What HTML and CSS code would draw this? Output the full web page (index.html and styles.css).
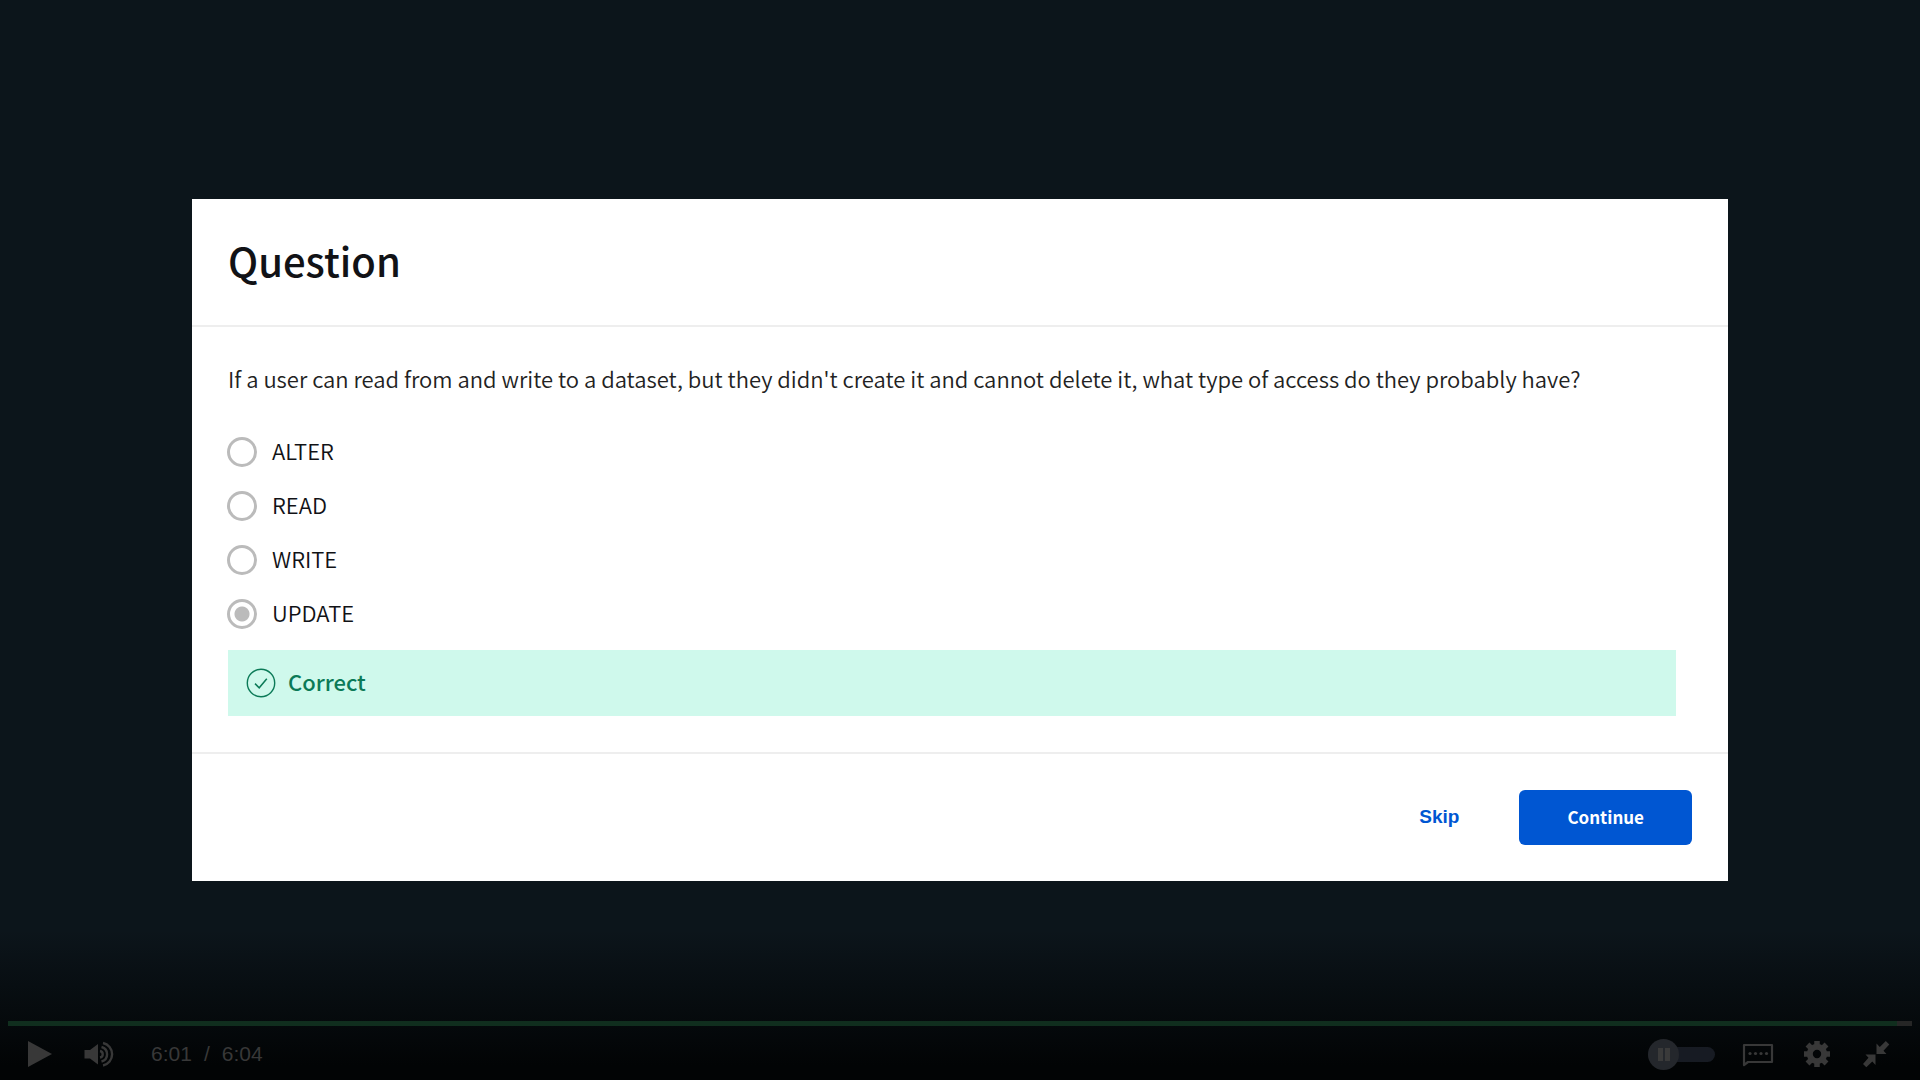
FILE: index.html
```html
<!DOCTYPE html>
<html lang="en">
<head>
<meta charset="utf-8">
<meta name="viewport" content="width=device-width, initial-scale=1">
<title>Question</title>
<link rel="stylesheet" href="styles.css">
</head>
<body>
<main class="player">
  <form class="dialog">
    <header class="dialog-header">
      <h1 class="dialog-title">Question</h1>
    </header>
    <fieldset class="dialog-body">
      <legend class="prompt">If a user can read from and write to a dataset, but they didn't create it and cannot delete it, what type of access do they probably have?</legend>
      <label class="option"><input class="radio" type="radio" name="access" value="alter"><span class="option-text">ALTER</span></label>
      <label class="option"><input class="radio" type="radio" name="access" value="read"><span class="option-text">READ</span></label>
      <label class="option"><input class="radio" type="radio" name="access" value="write"><span class="option-text">WRITE</span></label>
      <label class="option"><input class="radio" type="radio" name="access" value="update" checked><span class="option-text">UPDATE</span></label>
      <p class="feedback">
        <svg class="feedback-icon" viewBox="0 0 30 30" fill="none" stroke="currentColor" aria-hidden="true">
          <circle cx="15" cy="15" r="13.7" stroke-width="1.4"/>
          <path d="M9 15.6l4.2 4.2 7.6-9" stroke-width="1.5"/>
        </svg>
        <span class="option-text">Correct</span>
      </p>
    </fieldset>
    <footer class="dialog-footer">
      <button class="skip" type="button">Skip</button>
      <button class="continue" type="button">Continue</button>
    </footer>
  </form>

  <section class="controls" aria-label="Video controls">
    <div class="progress"><div class="progress-played" style="width: 99.2%"></div></div>
    <div class="control-row">
      <button class="control" type="button" aria-label="Play">
        <svg class="icon" viewBox="0 0 32 32" fill="currentColor"><path d="M4 3l24 13-24 13z"/></svg>
      </button>
      <button class="control volume" type="button" aria-label="Mute">
        <svg class="icon" viewBox="0 0 32 32">
          <path fill="currentColor" d="M1.500 12h5.500L15 6v20.500L7 20.500H1.500z"/>
          <g fill="none" stroke="currentColor" stroke-width="2.400">
            <path d="M17 13a3.300 3.300 0 0 1 0 6.500"/>
            <path d="M18.500 9a7.500 7.500 0 0 1 0 14.500"/>
            <path d="M20 5a11.500 11.500 0 0 1 0 22.500"/>
          </g>
        </svg>
      </button>
      <div class="time"><span>6:01</span><span>/</span><span>6:04</span></div>
      <div class="control-end">
        <button class="autoplay" type="button" aria-label="Autoplay">
          <span class="autoplay-knob"></span>
        </button>
        <button class="control" type="button" aria-label="Captions">
          <svg class="icon" viewBox="0 0 32 32">
            <path fill="none" stroke="currentColor" stroke-width="2.200" stroke-linejoin="round" d="M2 7h28v17H6l-4 3z"/>
            <g fill="currentColor"><circle cx="8" cy="15.500" r="1.600"/><circle cx="13.500" cy="15.500" r="1.600"/><circle cx="19" cy="15.500" r="1.600"/><circle cx="24.500" cy="15.500" r="1.600"/></g>
          </svg>
        </button>
        <button class="control" type="button" aria-label="Settings">
          <svg class="icon" viewBox="0 0 32 32">
            <circle cx="16" cy="16" r="7.200" fill="none" stroke="currentColor" stroke-width="6"/>
            <g stroke="currentColor" stroke-width="5.500"><path d="M16 3v4M16 25v4M3 16h4M25 16h4M6.500 6.500l4 4M21.500 21.500l4 4M25.500 6.500l-4 4M10.500 21.500l-4 4"/></g>
          </svg>
        </button>
        <button class="control" type="button" aria-label="Exit full screen">
          <svg class="icon" viewBox="0 0 32 32" fill="currentColor">
            <path d="M16.500 5.500v10.500h10l-3-3.200 5.800-6.300-3.500-3.500-6 6zM15.500 27V16.500h-10l3 3.200L3 26l3.300 3.300 6-5.800z"/>
          </svg>
        </button>
      </div>
    </div>
  </section>
</main>
</body>
</html>
```
FILE: styles.css
```css
* { box-sizing: border-box; }

body {
  margin: 0;
  background: #0c151b;
  font-family: "Noto Sans CJK SC", "Noto Sans", sans-serif;
  color: #111216;
}

button {
  border: 0;
  padding: 0;
  background: none;
  cursor: pointer;
}

.player {
  position: relative;
  display: grid;
  grid-template-columns: 80%;
  place-content: center;
  min-height: 100vh;
}

.dialog { background: #fff; }

.dialog-header {
  padding: 36px 36px 40px;
  border-bottom: 2px solid #eee;
}

.dialog-title {
  margin: 0;
  font-size: 40px;
  font-weight: 500;
  line-height: 50px;
}

.dialog-body {
  min-width: 0;
  margin: 0;
  border: 0;
  padding: 36px 52px 36px 36px;
}

.prompt {
  float: left;
  width: 100%;
  margin-bottom: 32px;
  padding: 0;
  color: #222;
  font-size: 22px;
  font-weight: 350;
  line-height: 30px;
}

.option {
  clear: both;
  display: flex;
  align-items: center;
  gap: 15px;
  height: 54px;
  margin-left: -1px;
  font-size: 22px;
  font-weight: 350;
}

.option-text { padding-bottom: 4px; }

.radio {
  appearance: none;
  width: 30px;
  height: 30px;
  margin: 0;
  border: 3px solid #bbb;
  border-radius: 50%;
}

.radio:checked {
  background: radial-gradient(circle, #bbb 7px, transparent 8px);
}

.feedback {
  display: flex;
  align-items: center;
  gap: 12px;
  height: 66px;
  margin: 9px 0 0;
  padding: 0 18px;
  background: #cff9ec;
  color: #0b7a57;
  font-size: 22px;
  font-weight: 500;
}

.feedback-icon {
  width: 30px;
  height: 30px;
}

.dialog-footer {
  display: flex;
  justify-content: flex-end;
  align-items: center;
  gap: 60px;
  padding: 36px;
  border-top: 2px solid #eee;
}

.skip {
  padding-bottom: 2px;
  color: #0056d2;
  font: bold 19px "Liberation Sans", sans-serif;
}

.continue {
  padding: 0 48px 2px;
  border-radius: 6px;
  background: #0056d2;
  color: #fff;
  font-family: inherit;
  font-size: 17px;
  font-weight: 700;
  line-height: 53px;
}

.controls {
  position: absolute;
  right: 0;
  bottom: 0;
  left: 0;
  padding: 91px 8px 0;
  background: linear-gradient(transparent, #020405 90%);
  color: #383838;
}

.progress {
  height: 5px;
  background: #262626;
}

.progress-played {
  height: 100%;
  background: #102e1e;
}

.control-row {
  display: flex;
  align-items: center;
  height: 54px;
  padding: 2px 20px 0 16px;
}

.control,
.icon {
  display: block;
  width: 32px;
  height: 32px;
}

.control { color: inherit; }

.volume { margin-left: 27px; }

.time {
  display: flex;
  gap: 12px;
  margin-left: 36px;
  font: 21px "Liberation Sans", sans-serif;
}

.control-end {
  display: flex;
  align-items: center;
  gap: 27px;
  margin-left: auto;
}

.autoplay {
  display: flex;
  align-items: center;
  width: 67px;
  height: 15px;
  border-radius: 8px;
  background: #171b23;
}

.autoplay-knob {
  display: flex;
  justify-content: center;
  align-items: center;
  gap: 2px;
  width: 31px;
  height: 31px;
  border-radius: 50%;
  background: #24272c;
}

.autoplay-knob::before,
.autoplay-knob::after {
  content: "";
  width: 5px;
  height: 13px;
  background: #3a3a3a;
}
```
